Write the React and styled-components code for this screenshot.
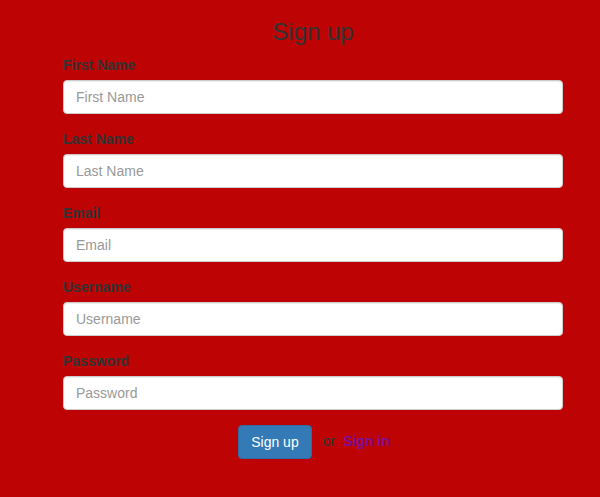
import React from 'react';
import styled, { createGlobalStyle } from 'styled-components';

const GlobalStyle = createGlobalStyle`
  html, body {
    margin: 0;
    padding: 0;
    background-color: #bd0303;
  }
  body {
    font-family: "Liberation Sans", Arial, Helvetica, sans-serif;
    font-size: 14px;
    line-height: 1.42857;
    color: #333;
  }
  * {
    box-sizing: border-box;
  }
`;

const Page = styled.div`
  width: 600px;
  min-height: 497px;
  background-color: #bd0303;
  padding-left: 63px;
`;

const Wrapper = styled.div`
  width: 500px;
`;

const Title = styled.h3`
  margin: 19px 0 10px;
  font-size: 24px;
  font-weight: 500;
  line-height: 1.1;
  text-align: center;
  color: #333;
`;

const Form = styled.form`
  display: flex;
  flex-direction: column;
`;

const Group = styled.div`
  margin-bottom: 15px;
`;

const Label = styled.label`
  display: block;
  margin-bottom: 5px;
  font-weight: bold;
  line-height: 20px;
`;

const Input = styled.input`
  display: block;
  width: 100%;
  height: 34px;
  padding: 6px 12px;
  font-family: inherit;
  font-size: 14px;
  color: #555;
  background-color: #fff;
  border: 1px solid #ccc;
  border-radius: 4px;
  box-shadow: inset 0 1px 1px rgba(0, 0, 0, 0.075);
  outline: none;

  &::placeholder {
    color: #999;
  }
`;

const Actions = styled.div`
  display: flex;
  align-items: center;
  justify-content: center;
  padding-left: 2px;
`;

const Button = styled.button`
  height: 34px;
  padding: 6px 12px;
  font-family: inherit;
  font-size: 14px;
  line-height: 20px;
  color: #fff;
  background-color: #337ab7;
  border: 1px solid #2e6da4;
  border-radius: 4px;
  cursor: pointer;
`;

const Or = styled.span`
  margin: 0 8px 0 11px;
  color: #333;
`;

const Link = styled.a`
  font-weight: bold;
  color: #7a0f9c;
  text-decoration: none;
`;

const fields = ['First Name', 'Last Name', 'Email', 'Username', 'Password'];

const App = () => {
  return (
    <Page>
      <GlobalStyle />
      <Wrapper>
        <Title>Sign up</Title>
        <Form>
          {fields.map((f) => (
            <Group key={f}>
              <Label>{f}</Label>
              <Input
                type={f === 'Password' ? 'password' : 'text'}
                placeholder={f}
              />
            </Group>
          ))}
          <Actions>
            <Button type="button">Sign up</Button>
            <Or>or</Or>
            <Link href="#">Sign in</Link>
          </Actions>
        </Form>
      </Wrapper>
    </Page>
  );
};

export default App;
